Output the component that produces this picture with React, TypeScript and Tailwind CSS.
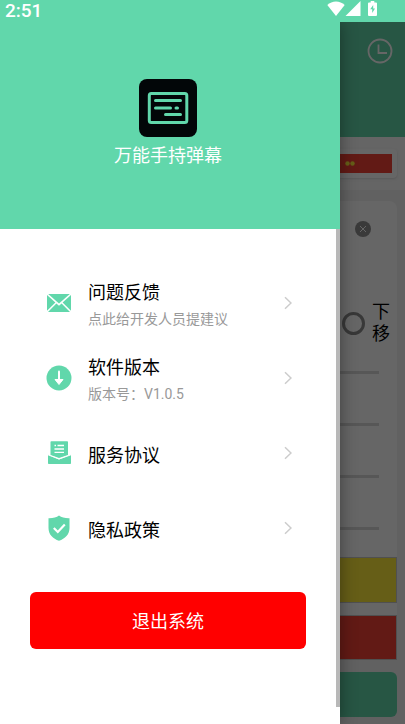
import type { ReactNode } from 'react';

type MenuItem = {
  title: string;
  subtitle?: string;
  icon: ReactNode;
};

function MailIcon() {
  return (
    <svg viewBox="0 0 26 26" className="h-[26px] w-[26px]" fill="#61d7ab">
      <path d="M2.2 4 L13 13.6 L23.8 4 Z" />
      <path d="M1 5 L9.4 12.6 L1 20.8 Z" />
      <path d="M25 5 L16.6 12.6 L25 20.8 Z" />
      <path d="M10.4 13.6 L13 15.8 L15.6 13.6 L24 22 H2 Z" />
    </svg>
  );
}

function DownloadIcon() {
  return (
    <svg viewBox="0 0 26 26" className="h-[26px] w-[26px]">
      <circle cx="13" cy="13" r="12.5" fill="#61d7ab" />
      <path d="M13 6.5 V15.5" stroke="#fff" strokeWidth="2" strokeLinecap="round" />
      <path d="M9 14.5 H17 L13 19.5 Z" fill="#fff" stroke="#fff" strokeWidth="1" strokeLinejoin="round" />
    </svg>
  );
}

function AgreementIcon() {
  return (
    <svg viewBox="0 0 26 26" className="h-[26px] w-[26px]">
      <path d="M4.5 2 Q4.5 1.2 5.3 1.2 H21.2 Q22 1.2 22 2 V15 L13 18 L4.5 15 Z" fill="#61d7ab" />
      <path d="M2 14.8 L13 19.4 L25 14.8 V23.2 Q25 24 24.2 24 H2.8 Q2 24 2 23.2 Z" fill="#61d7ab" />
      <path d="M2 14.8 L13 19 L25 14.8" fill="none" stroke="#fff" strokeWidth="1" />
      <path d="M8.5 5.5 H10 M11.5 5.5 H18 M8.5 9 H18 M8.5 12.3 H18" stroke="#fff" strokeWidth="1.3" />
    </svg>
  );
}

function ShieldIcon() {
  return (
    <svg viewBox="0 0 26 26" className="h-[26px] w-[26px]">
      <path
        d="M13 0.5 C15.5 2.5 19 3.3 23.5 3.2 V13 C23.5 19.5 19 23.8 13 25.8 C7 23.8 2.5 19.5 2.5 13 V3.2 C7 3.3 10.5 2.5 13 0.5 Z"
        fill="#61d7ab"
      />
      <path d="M7.8 13 L11.8 17 L18.8 9.6" fill="none" stroke="#fff" strokeWidth="2.2" />
    </svg>
  );
}

function AppLogo() {
  return (
    <svg viewBox="0 0 58 58" className="h-[58px] w-[58px]" fill="none" stroke="#61d7ab" strokeLinecap="round">
      <rect width="58" height="58" rx="8" fill="#020608" stroke="none" />
      <rect x="10.3" y="14.5" width="37.5" height="29" rx="2" strokeWidth="3" />
      <path d="M16.5 21.5 H41.5 M16.5 29 H31.5 M37 29 H38.5 M26.5 35.5 H41.5" strokeWidth="3" />
    </svg>
  );
}

const menu: MenuItem[] = [
  { title: '问题反馈', subtitle: '点此给开发人员提建议', icon: <MailIcon /> },
  { title: '软件版本', subtitle: '版本号：V1.0.5', icon: <DownloadIcon /> },
  { title: '服务协议', icon: <AgreementIcon /> },
  { title: '隐私政策', icon: <ShieldIcon /> },
];

const sliders = ['字体大小', '滚动速度', '字体间距', '闪烁频率'];

function StatusBar() {
  return (
    <div className="relative z-20 flex h-[22px] items-start justify-between bg-[#61d7ab] pl-[5px] pr-7 text-white">
      <span className="text-[19px] font-medium leading-[21px]">2:51</span>
      <div className="flex items-start pt-px">
        <svg viewBox="0 0 18 15" className="h-[15px] w-[18px]" fill="currentColor">
          <path d="M9 15 L0.3 4 C5 -0.8 13 -0.8 17.7 4 Z" />
        </svg>
        <svg viewBox="0 0 16 15" className="h-[15px] w-4" fill="currentColor">
          <path d="M15.5 0 V15 H0.5 Z" />
        </svg>
        <svg viewBox="0 0 9 15" className="ml-[7px] h-[15px] w-[9px]">
          <path d="M2.7 0 H6.3 V1.5 H8 Q9 1.5 9 2.5 V14 Q9 15 8 15 H1 Q0 15 0 14 V2.5 Q0 1.5 1 1.5 H2.7 Z" fill="currentColor" />
          <path d="M5.2 4 L2.2 8.2 H4.2 V12 L7 7.6 H5.2 Z" fill="#61d7ab" />
        </svg>
      </div>
    </div>
  );
}

// Main screen behind the drawer
function EditorScreen() {
  return (
    <main className="flex flex-1 flex-col bg-[#f2f2f2]">
      <header className="flex h-[115px] items-start justify-end bg-[#61d7ab] px-3 pt-4">
        <button type="button" aria-label="历史记录">
          <svg viewBox="0 0 26 26" className="h-[26px] w-[26px]" fill="none" stroke="#fff" strokeWidth="1.8">
            <circle cx="13" cy="13" r="11.5" />
            <path d="M11.5 6.5 V15 H20" />
          </svg>
        </button>
      </header>

      <section className="bg-[#fcfcfc] px-2 py-3">
        <div className="rounded-sm bg-white p-[5px] shadow">
          <div className="flex h-[19px] items-center justify-end bg-[#f44336] pr-[37px]">
            <svg viewBox="0 0 10 5" className="h-[5px] w-2.5" fill="#ffeb3b">
              <circle cx="2.5" cy="2.5" r="2.2" />
              <circle cx="7.5" cy="2.5" r="2.2" />
            </svg>
          </div>
        </div>
      </section>

      <section className="mx-2 mt-[11px] flex flex-col rounded-t-lg bg-white">
        <div className="flex justify-end pr-[26px] pt-5">
          <button type="button" aria-label="清空">
            <svg viewBox="0 0 16 16" className="h-4 w-4">
              <circle cx="8" cy="8" r="8" fill="#919191" />
              <path d="M5 5 L11 11 M11 5 L5 11" stroke="#fff" strokeWidth="1" />
            </svg>
          </button>
        </div>
        <label className="mt-16 flex items-center justify-end gap-[7px] pr-[7px] text-lg leading-[22px] text-black">
          <input type="radio" name="direction" className="h-[23px] w-[23px] appearance-none rounded-full border-[3px] border-[#8c8c8c]" />
          <span className="w-[18px]">下移</span>
        </label>
        <div className="mt-[26px] flex flex-col gap-[49px] pr-[18px]">
          {sliders.map((name) => (
            <input
              key={name}
              type="range"
              defaultValue={10}
              aria-label={name}
              className="h-[3px] w-full appearance-none bg-[#d9d9d9] [&::-webkit-slider-thumb]:appearance-none"
            />
          ))}
        </div>
        <button type="button" aria-label="字体颜色" className="mt-[27px] h-[46px] border border-[#c8c8c8] bg-[#ffeb3b]" />
        <button type="button" aria-label="背景颜色" className="mt-3 h-[45px] border border-[#c8c8c8] bg-[#f44336]" />
      </section>

      <button type="button" aria-label="开始" className="mx-2 mb-[7px] mt-3 h-[45px] rounded-md bg-[#61d7ab]" />
    </main>
  );
}

function Drawer() {
  return (
    <aside className="absolute bottom-0 left-0 top-[22px] z-10 flex w-[84%] flex-col bg-white shadow-[0_0_16px_rgba(0,0,0,0.4)]">
      <div className="flex h-[207px] flex-col items-center bg-[#61d7ab] pr-1 pt-[57px]">
        <AppLogo />
        <h1 className="mt-[7px] text-lg leading-6 text-white">万能手持弹幕</h1>
      </div>

      <div className="flex flex-1">
        <div className="flex flex-1 flex-col pt-9">
          <nav>
            {menu.map((item) => (
              <a key={item.title} href="#" className="flex h-[75px] items-center pl-[46px] pr-11">
                {item.icon}
                <div className="ml-4 flex flex-1 flex-col gap-0.5 pt-1.5">
                  <span className="text-lg leading-6 text-black">{item.title}</span>
                  {item.subtitle && <span className="text-sm leading-6 text-[#999]">{item.subtitle}</span>}
                </div>
                <svg viewBox="0 0 8 14" className="h-3.5 w-2" fill="none" stroke="#ccc" strokeWidth="1.5">
                  <path d="M1 1.2 L7 7 L1 12.8" />
                </svg>
              </a>
            ))}
          </nav>
          <button type="button" className="mx-[30px] mt-[27px] h-[57px] rounded-md bg-[#ff0000] pt-0.5 text-lg text-white">
            退出系统
          </button>
        </div>
        <div className="mb-[17px] w-1 bg-[#b8b8b8]" />
      </div>
    </aside>
  );
}

export default function App() {
  return (
    <div className="relative flex min-h-screen flex-col overflow-hidden font-['Roboto','Noto_Sans_CJK_SC',sans-serif]">
      <StatusBar />
      <EditorScreen />
      <div className="absolute inset-x-0 bottom-0 top-[22px] bg-black/60" />
      <Drawer />
    </div>
  );
}
